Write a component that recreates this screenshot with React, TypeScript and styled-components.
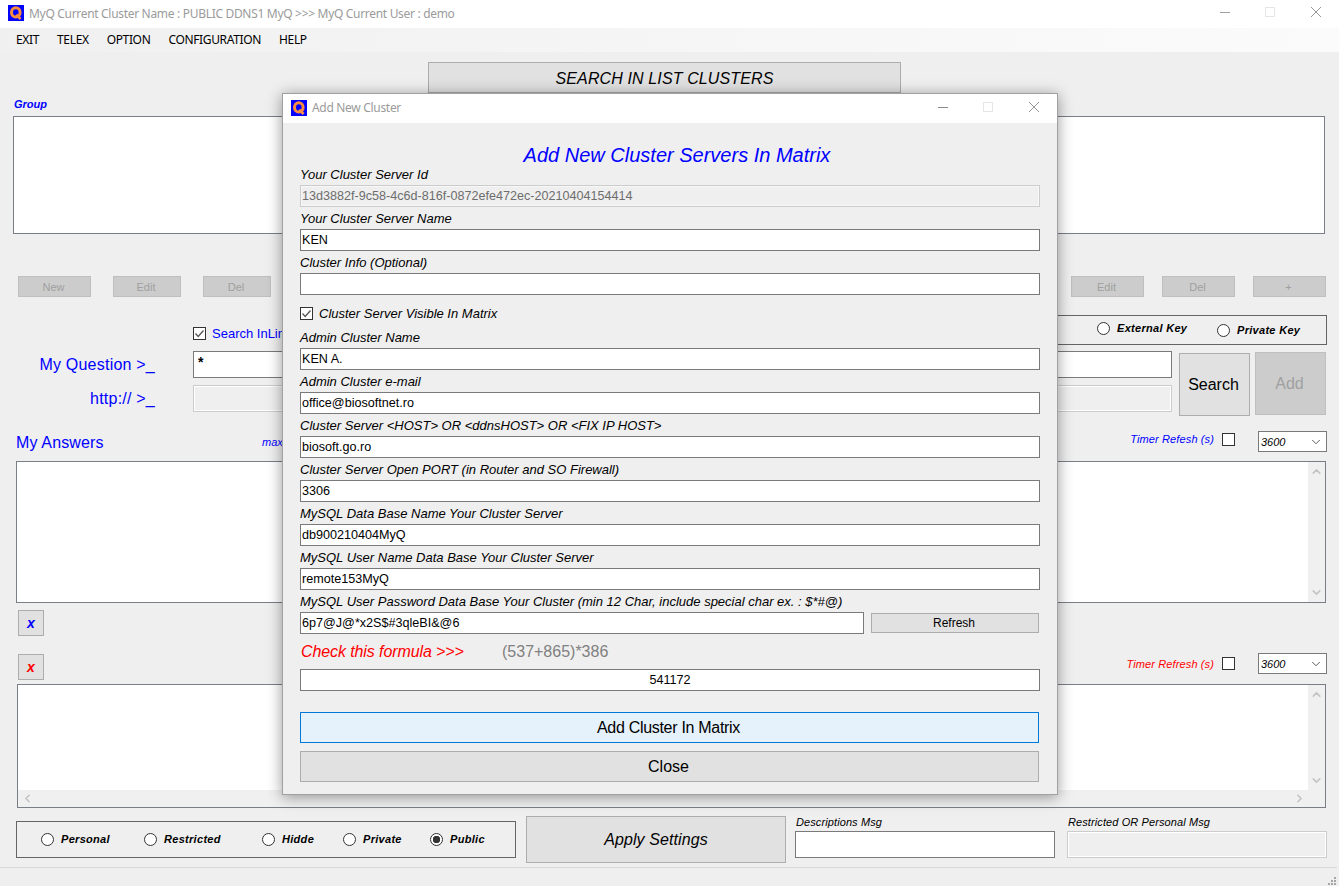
import React from "react";
import styled, { createGlobalStyle } from "styled-components";
import { ChevronDown, ChevronLeft, ChevronRight, ChevronUp } from "lucide-react";

const GlobalStyle = createGlobalStyle`
  html, body {
    margin: 0;
    height: 100%;
    overflow: hidden;
    background: #efefef;
    font-family: "Liberation Sans", Arial, sans-serif;
  }
  * {
    box-sizing: border-box;
  }
`;

const Page = styled.div`
  position: relative;
  width: 1339px;
  height: 886px;
  display: flex;
  flex-direction: column;
  overflow: hidden;
  background: #efefef;
`;

const TitleBar = styled.div<{ $modal?: boolean }>`
  flex: none;
  height: ${({ $modal }) => ($modal ? "29px" : "28px")};
  display: flex;
  align-items: center;
  gap: 5px;
  padding: 0 0 2px 8px;
  background: #fff;
  color: #9b9b9b;
  font-family: "Noto Sans", sans-serif;
  font-size: 12px;
  letter-spacing: -0.31px;
`;

const TitleText = styled.span`
  flex: 1;
  white-space: nowrap;
`;

const WindowControls = styled.div`
  display: flex;
  align-items: center;
  gap: 35px;
  padding: 0 18px 2px 0;

  svg:last-child {
    margin-left: 1px;
  }
`;

const MenuBar = styled.nav`
  flex: none;
  height: 24px;
  display: flex;
  align-items: center;
  gap: 18px;
  padding: 0 0 2px 16px;
  background: linear-gradient(to right, #f0f0f0, #fbfbfb);
  color: #000;
  font-family: "Noto Sans", sans-serif;
  font-size: 12px;
  letter-spacing: -0.35px;
`;

const Main = styled.main`
  flex: 1;
  display: flex;
  flex-direction: column;
  padding: 0 12px 0 16px;
`;

const SearchHeader = styled.div`
  width: 473px;
  height: 31px;
  margin: 10px 0 0 412px;
  padding-top: 2px;
  display: flex;
  align-items: center;
  justify-content: center;
  background: #e1e1e1;
  border: 1px solid #adadad;
  font-size: 16px;
  font-style: italic;
  letter-spacing: 0.12px;
`;

const GroupLabel = styled.div`
  height: 23px;
  margin-left: -2px;
  padding-bottom: 2px;
  display: flex;
  align-items: center;
  color: #0000ff;
  font-size: 11px;
  font-weight: 700;
  font-style: italic;
`;

const ListBox = styled.div`
  height: 118px;
  margin: 0 2px 0 -3px;
  background: #fff;
  border: 1px solid #7a7f87;
`;

const Toolbar = styled.div`
  height: 21px;
  margin: 42px 1px 0 2px;
  display: flex;
  justify-content: space-between;
`;

const ToolGroup = styled.div<{ $gap: number }>`
  display: flex;
  gap: ${({ $gap }) => $gap}px;
`;

const ToolButton = styled.div<{ $w: number }>`
  width: ${({ $w }) => $w}px;
  display: flex;
  align-items: center;
  justify-content: center;
  padding-right: 2px;
  background: #cccccc;
  border: 1px solid #bfbfbf;
  color: #a0a0a0;
  font-size: 11px;
`;

const OptionsRow = styled.div`
  height: 30px;
  margin-top: 18px;
  display: flex;
  align-items: center;
  padding-left: 177px;
`;

const CheckLabel = styled.label<{ $blue?: boolean }>`
  display: flex;
  align-items: center;
  gap: 6px;
  margin-top: ${({ $blue }) => ($blue ? "6px" : "0")};
  white-space: nowrap;
  color: ${({ $blue }) => ($blue ? "#0000ff" : "#000")};
  font-size: 13px;
  font-style: ${({ $blue }) => ($blue ? "normal" : "italic")};
`;

const Box = styled.span`
  flex: none;
  width: 13px;
  height: 13px;
  display: flex;
  align-items: center;
  justify-content: center;
  background: #fff;
  border: 1px solid #333;
`;

const KeyBox = styled.div`
  width: 620px;
  height: 30px;
  margin-left: auto;
  display: flex;
  justify-content: flex-end;
  align-items: center;
  padding-right: 26px;
  border: 1px solid #646464;
`;

const RadioItem = styled.label<{ $w?: number; $drop?: number }>`
  flex: none;
  width: ${({ $w }) => ($w ? `${$w}px` : "auto")};
  margin-top: ${({ $drop }) => $drop ?? 0}px;
  display: flex;
  align-items: center;
  gap: 7px;
  color: #000;
  font-size: 11px;
  font-weight: 700;
  font-style: italic;
  letter-spacing: 0.3px;
  white-space: nowrap;
`;

const RadioDot = styled.span<{ $on?: boolean }>`
  flex: none;
  width: 13px;
  height: 13px;
  border: 1px solid #333;
  border-radius: 50%;
  background: ${({ $on }) =>
    $on ? "radial-gradient(circle, #333 0 3.5px, #fff 4px)" : "#fff"};
`;

const QuestionGrid = styled.div`
  height: 65px;
  display: grid;
  grid-template-columns: 139px 1017px 78px 76px;
  grid-template-rows: 27px 27px;
  row-gap: 7px;
  margin-top: 6px;
`;

const PromptLabel = styled.div<{ $row: number }>`
  grid-column: 1;
  grid-row: ${({ $row }) => $row};
  display: flex;
  align-items: center;
  justify-content: flex-end;
  color: #0000ff;
  font-size: 16px;
  letter-spacing: 0.22px;
  white-space: nowrap;
`;

const QuestionInput = styled.input<{ $off?: boolean; $row: number }>`
  grid-column: 2;
  grid-row: ${({ $row }) => $row};
  margin-left: 38px;
  width: 979px;
  height: 27px;
  padding: 0 0 6px 4px;
  background: ${({ $off }) => ($off ? "#efefef" : "#fff")};
  border: 1px solid ${({ $off }) => ($off ? "#cccccc" : "#7a7a7a")};
  box-shadow: ${({ $off }) => ($off ? "inset 0 0 0 1px #fff" : "none")};
  outline: none;
  font-family: "Liberation Sans", Arial, sans-serif;
  font-size: 14px;
  font-weight: 700;
`;

const BigButton = styled.div<{ $off?: boolean }>`
  grid-column: ${({ $off }) => ($off ? 4 : 3)};
  grid-row: 1 / span 2;
  width: 71px;
  height: 63px;
  margin: ${({ $off }) => ($off ? "1px 0 0 5px" : "2px 0 0 7px")};
  padding-top: 1px;
  padding-right: 2px;
  display: flex;
  align-items: center;
  justify-content: center;
  background: ${({ $off }) => ($off ? "#cccccc" : "#e1e1e1")};
  border: 1px solid ${({ $off }) => ($off ? "#bfbfbf" : "#adadad")};
  color: ${({ $off }) => ($off ? "#a0a0a0" : "#000")};
  font-size: 16px;
`;

const HeaderRow = styled.div<{ $mt: number }>`
  height: 21px;
  margin-top: ${({ $mt }) => $mt}px;
  display: flex;
  align-items: center;
`;

const SectionTitle = styled.div`
  width: 246px;
  padding-top: 2px;
  color: #0000ff;
  font-size: 16px;
  letter-spacing: 0.15px;
`;

const MaxNote = styled.div`
  color: #0000ff;
  font-size: 11px;
  font-style: italic;
`;

const TimerGroup = styled.div`
  margin-left: auto;
  display: flex;
  align-items: center;
`;

const TimerCheck = styled.div<{ $raised?: boolean }>`
  display: flex;
  align-items: center;
  margin-bottom: ${({ $raised }) => ($raised ? "5px" : "0")};
`;

const TimerLabel = styled.span<{ $red?: boolean }>`
  margin-right: 8px;
  color: ${({ $red }) => ($red ? "#ff0000" : "#0000ff")};
  font-size: 11px;
  font-style: italic;
  letter-spacing: 0.12px;
`;

const SelectBox = styled.div`
  width: 69px;
  height: 21px;
  margin-left: 23px;
  display: flex;
  align-items: center;
  justify-content: space-between;
  padding: 0 3px 0 2px;
  background: #fff;
  border: 1px solid #7a7a7a;
  font-size: 11px;
  font-style: italic;
`;

const AnswerBox = styled.div<{ $h: number; $ml: number; $mt: number }>`
  height: ${({ $h }) => $h}px;
  margin: ${({ $mt }) => $mt}px 1px 0 ${({ $ml }) => $ml}px;
  display: grid;
  grid-template-columns: 1fr 17px;
  grid-template-rows: 1fr auto;
  background: #fff;
  border: 1px solid #7a7f87;
`;

const VScroll = styled.div`
  grid-column: 2;
  display: flex;
  flex-direction: column;
  align-items: center;
  justify-content: space-between;
  padding: 3px 0;
  background: #f0f0f0;
  color: #c4c4c4;
`;

const HScroll = styled.div`
  grid-column: 1 / span 2;
  height: 17px;
  display: flex;
  align-items: center;
  justify-content: space-between;
  padding: 0 19px 0 3px;
  background: #f0f0f0;
  color: #c4c4c4;
`;

const ClearButton = styled.div<{ $color: string }>`
  flex: none;
  width: 26px;
  height: 26px;
  margin-left: 2px;
  display: flex;
  align-items: center;
  justify-content: center;
  background: #e1e1e1;
  border: 1px solid #adadad;
  color: ${({ $color }) => $color};
  font-size: 14px;
  font-weight: 700;
  font-style: italic;
`;

const ClearRow = styled.div`
  margin-top: 7px;
`;

const SecondHeader = styled.div`
  height: 26px;
  margin-top: 18px;
  display: flex;
  align-items: flex-start;
`;

const SecondTimer = styled(TimerGroup)`
  height: 21px;
  margin-top: -1px;
`;

const BottomRow = styled.div`
  height: 47px;
  margin-top: 8px;
  display: grid;
  grid-template-columns: 500px 260px 260px 260px;
  column-gap: 10px;
`;

const VisibilityBox = styled.div`
  height: 37px;
  margin-top: 5px;
  display: flex;
  align-items: center;
  padding: 0 0 1px 24px;
  border: 1px solid #646464;
`;

const ApplyButton = styled.div`
  display: flex;
  align-items: center;
  justify-content: center;
  background: #e1e1e1;
  border: 1px solid #adadad;
  font-size: 16px;
  font-style: italic;
  letter-spacing: 0.1px;
`;

const MsgField = styled.div<{ $ml: number }>`
  margin-left: ${({ $ml }) => $ml}px;
  width: 260px;
`;

const MsgLabel = styled.div`
  height: 15px;
  padding: 0 0 3px 1px;
  display: flex;
  align-items: center;
  font-size: 11px;
  font-style: italic;
  letter-spacing: 0.1px;
  white-space: nowrap;
`;

const MsgInput = styled.div<{ $off?: boolean }>`
  height: 27px;
  background: ${({ $off }) => ($off ? "#efefef" : "#fff")};
  border: 1px solid ${({ $off }) => ($off ? "#cccccc" : "#7a7a7a")};
  box-shadow: ${({ $off }) => ($off ? "inset 0 0 0 1px #fff" : "none")};
`;

const StatusBar = styled.footer`
  flex: none;
  height: 19px;
  margin-right: 2px;
  display: flex;
  justify-content: flex-end;
  align-items: flex-end;
  border-top: 1px solid #d9d9d9;
`;

const Modal = styled.section`
  position: absolute;
  left: 282px;
  top: 93px;
  width: 776px;
  height: 702px;
  display: flex;
  flex-direction: column;
  background: #efefef;
  border: 1px solid #a0a0a0;
  box-shadow: 0 2px 14px rgba(0, 0, 0, 0.4);
`;

const ModalBody = styled.div`
  flex: 1;
  padding: 0 17px;
  display: flex;
  flex-direction: column;
`;

const ModalHeading = styled.h1`
  height: 40px;
  margin: 0;
  padding: 24px 0 0 14px;
  display: flex;
  align-items: center;
  justify-content: center;
  color: #0000ff;
  font-size: 20px;
  font-weight: 400;
  font-style: italic;
  line-height: 23px;
`;

const FieldLabel = styled.div`
  height: 22px;
  display: flex;
  align-items: center;
  font-size: 13px;
  font-style: italic;
  white-space: nowrap;
`;

const TextField = styled.input<{ $off?: boolean; $center?: boolean }>`
  display: block;
  width: 100%;
  height: 22px;
  padding: 0 1px;
  background: ${({ $off }) => ($off ? "#efefef" : "#fff")};
  border: 1px solid ${({ $off }) => ($off ? "#cccccc" : "#7a7a7a")};
  box-shadow: ${({ $off }) => ($off ? "inset 0 0 0 1px #f7f7f7" : "none")};
  outline: none;
  color: ${({ $off }) => ($off ? "#6d6d6d" : "#000")};
  font-family: "Liberation Sans", Arial, sans-serif;
  font-size: 12.6px;
  text-align: ${({ $center }) => ($center ? "center" : "left")};
`;

const CheckRow = styled.div`
  height: 31px;
  padding-top: 5px;
  display: flex;
  align-items: center;
`;

const PasswordRow = styled.div`
  display: grid;
  grid-template-columns: 564px 168px;
  column-gap: 7px;
  align-items: center;
`;

const RefreshButton = styled.div`
  height: 20px;
  display: flex;
  align-items: center;
  justify-content: center;
  padding-right: 2px;
  background: #e1e1e1;
  border: 1px solid #adadad;
  font-size: 12px;
`;

const FormulaRow = styled.div`
  height: 35px;
  padding-top: 1px;
  display: grid;
  grid-template-columns: 202px auto;
  align-items: center;
`;

const FormulaLabel = styled.div`
  padding-left: 1px;
  color: #ff0000;
  font-size: 16px;
  font-style: italic;
  letter-spacing: -0.1px;
`;

const FormulaValue = styled.div`
  margin-bottom: 1px;
  color: #808080;
  font-size: 16px;
`;

const WideButton = styled.div<{ $primary?: boolean }>`
  height: 31px;
  margin: ${({ $primary }) => ($primary ? "21px 1px 0 0" : "8px 1px 0 0")};
  padding-right: 2px;
  display: flex;
  align-items: center;
  justify-content: center;
  background: ${({ $primary }) => ($primary ? "#e5f1fb" : "#e1e1e1")};
  border: 1px solid ${({ $primary }) => ($primary ? "#0078d7" : "#adadad")};
  font-size: 16px;
  letter-spacing: ${({ $primary }) => ($primary ? "-0.3px" : "0")};
`;

const AppLogo = () => (
  <svg width="16" height="16" viewBox="0 0 16 16" style={{ flex: "none" }}>
    <rect width="16" height="16" fill="#0000ff" />
    <ellipse cx="7.8" cy="7.4" rx="4.3" ry="4.6" fill="#0000ff" stroke="#f98f3e" strokeWidth="3" />
    <path d="M8.2 9.8L12.6 14" stroke="#f98f3e" strokeWidth="2.6" />
  </svg>
);

const Minimize = ({ dark }: { dark?: boolean }) => (
  <svg width="10" height="10" viewBox="0 0 10 10">
    <path d="M0 5.5H10" stroke={dark ? "#8c8c8c" : "#a0a0a0"} />
  </svg>
);

const Maximize = () => (
  <svg width="10" height="10" viewBox="0 0 10 10">
    <rect x="0.5" y="0.5" width="9" height="9" fill="none" stroke="#e6e6e6" />
  </svg>
);

const CloseIcon = () => (
  <svg width="10" height="10" viewBox="0 0 10 10">
    <path d="M0 0L10 10M10 0L0 10" stroke="#8c8c8c" strokeWidth="0.9" />
  </svg>
);

const Grip = () => (
  <svg width="10" height="10" viewBox="0 0 10 10" fill="#a6a6a6">
    <rect x="7" y="1" width="2" height="2" />
    <rect x="4" y="4" width="2" height="2" />
    <rect x="7" y="4" width="2" height="2" />
    <rect x="1" y="7" width="2" height="2" />
    <rect x="4" y="7" width="2" height="2" />
    <rect x="7" y="7" width="2" height="2" />
  </svg>
);

const CheckMark = () => (
  <svg width="11" height="11" viewBox="0 0 11 11">
    <path d="M1.5 5.5L4.2 8.5L9.5 2.5" fill="none" stroke="#555" strokeWidth="1.3" />
  </svg>
);

const Timer = ({ label, red }: { label: string; red?: boolean }) => (
  <>
    <TimerCheck $raised={!red}>
      <TimerLabel $red={red}>{label}</TimerLabel>
      <Box />
    </TimerCheck>
    <SelectBox>
      3600
      <ChevronDown size={14} strokeWidth={1.5} color="#444" />
    </SelectBox>
  </>
);

const fields: { label: string; value: string }[] = [
  { label: "Admin Cluster Name", value: "KEN A." },
  { label: "Admin Cluster e-mail", value: "office@biosoftnet.ro" },
  { label: "Cluster Server <HOST> OR <ddnsHOST> OR <FIX IP HOST>", value: "biosoft.go.ro" },
  { label: "Cluster Server Open PORT (in Router and SO Firewall)", value: "3306" },
  { label: "MySQL Data Base Name Your Cluster Server", value: "db900210404MyQ" },
  { label: "MySQL User Name Data Base Your Cluster Server", value: "remote153MyQ" },
];

const visibility = [
  { label: "Personal", w: 103 },
  { label: "Restricted", w: 118 },
  { label: "Hidde", w: 81 },
  { label: "Private", w: 87 },
  { label: "Public", w: 70, on: true },
];

const App: React.FC = () => {
  return (
    <Page>
      <GlobalStyle />
      <TitleBar>
        <AppLogo />
        <TitleText>MyQ Current Cluster Name : PUBLIC DDNS1 MyQ &gt;&gt;&gt; MyQ Current User : demo</TitleText>
        <WindowControls>
          <Minimize />
          <Maximize />
          <CloseIcon />
        </WindowControls>
      </TitleBar>
      <MenuBar>
        <span>EXIT</span>
        <span>TELEX</span>
        <span>OPTION</span>
        <span>CONFIGURATION</span>
        <span>HELP</span>
      </MenuBar>

      <Main>
        <SearchHeader>SEARCH IN LIST CLUSTERS</SearchHeader>
        <GroupLabel>Group</GroupLabel>
        <ListBox />

        <Toolbar>
          <ToolGroup $gap={22}>
            <ToolButton $w={73}>New</ToolButton>
            <ToolButton $w={68}>Edit</ToolButton>
            <ToolButton $w={68}>Del</ToolButton>
          </ToolGroup>
          <ToolGroup $gap={18}>
            <ToolButton $w={73}>Edit</ToolButton>
            <ToolButton $w={73}>Del</ToolButton>
            <ToolButton $w={73}>+</ToolButton>
          </ToolGroup>
        </Toolbar>

        <OptionsRow>
          <CheckLabel $blue>
            <Box>
              <CheckMark />
            </Box>
            Search InLine
          </CheckLabel>
          <KeyBox>
            <RadioItem $w={169} $drop={-2}>
              <RadioDot />
              Public Key
            </RadioItem>
            <RadioItem $w={120} $drop={-4}>
              <RadioDot />
              External Key
            </RadioItem>
            <RadioItem $w={83}>
              <RadioDot />
              Private Key
            </RadioItem>
          </KeyBox>
        </OptionsRow>

        <QuestionGrid>
          <PromptLabel $row={1}>My Question &gt;_</PromptLabel>
          <QuestionInput $row={1} defaultValue="*" />
          <BigButton>Search</BigButton>
          <BigButton $off>Add</BigButton>
          <PromptLabel $row={2}>http:// &gt;_</PromptLabel>
          <QuestionInput $row={2} $off />
        </QuestionGrid>

        <HeaderRow $mt={15}>
          <SectionTitle>My Answers</SectionTitle>
          <MaxNote>max</MaxNote>
          <TimerGroup>
            <Timer label="Timer Refesh (s)" />
          </TimerGroup>
        </HeaderRow>

        <AnswerBox $h={142} $ml={0} $mt={9}>
          <VScroll>
            <ChevronUp size={13} strokeWidth={3} />
            <ChevronDown size={13} strokeWidth={3} />
          </VScroll>
        </AnswerBox>

        <ClearRow>
          <ClearButton $color="#0000ff">x</ClearButton>
        </ClearRow>

        <SecondHeader>
          <ClearButton $color="#ff0000">x</ClearButton>
          <SecondTimer>
            <Timer label="Timer Refresh (s)" red />
          </SecondTimer>
        </SecondHeader>

        <AnswerBox $h={124} $ml={1} $mt={4}>
          <VScroll>
            <ChevronUp size={13} strokeWidth={3} />
            <ChevronDown size={13} strokeWidth={3} />
          </VScroll>
          <HScroll>
            <ChevronLeft size={13} strokeWidth={3} />
            <ChevronRight size={13} strokeWidth={3} />
          </HScroll>
        </AnswerBox>

        <BottomRow>
          <VisibilityBox>
            {visibility.map((v) => (
              <RadioItem key={v.label} $w={v.w}>
                <RadioDot $on={v.on} />
                {v.label}
              </RadioItem>
            ))}
          </VisibilityBox>
          <ApplyButton>Apply Settings</ApplyButton>
          <MsgField $ml={-1}>
            <MsgLabel>Descriptions Msg</MsgLabel>
            <MsgInput />
          </MsgField>
          <MsgField $ml={1}>
            <MsgLabel>Restricted OR Personal Msg</MsgLabel>
            <MsgInput $off />
          </MsgField>
        </BottomRow>
      </Main>

      <StatusBar>
        <Grip />
      </StatusBar>

      <Modal>
        <TitleBar $modal>
          <AppLogo />
          <TitleText>Add New Cluster</TitleText>
          <WindowControls>
            <Minimize dark />
            <Maximize />
            <CloseIcon />
          </WindowControls>
        </TitleBar>
        <ModalBody>
          <ModalHeading>Add New Cluster Servers In Matrix</ModalHeading>
          <FieldLabel>Your Cluster Server Id</FieldLabel>
          <TextField $off readOnly value="13d3882f-9c58-4c6d-816f-0872efe472ec-20210404154414" />
          <FieldLabel>Your Cluster Server Name</FieldLabel>
          <TextField readOnly value="KEN" />
          <FieldLabel>Cluster Info (Optional)</FieldLabel>
          <TextField readOnly value="" />
          <CheckRow>
            <CheckLabel>
              <Box>
                <CheckMark />
              </Box>
              Cluster Server Visible In Matrix
            </CheckLabel>
          </CheckRow>
          {fields.map((f) => (
            <React.Fragment key={f.label}>
              <FieldLabel>{f.label}</FieldLabel>
              <TextField readOnly value={f.value} />
            </React.Fragment>
          ))}
          <FieldLabel>MySQL User Password Data Base Your Cluster (min 12 Char, include special char ex. : $*#@)</FieldLabel>
          <PasswordRow>
            <TextField readOnly value="6p7@J@*x2S$#3qleBI&@6" />
            <RefreshButton>Refresh</RefreshButton>
          </PasswordRow>
          <FormulaRow>
            <FormulaLabel>Check this formula &gt;&gt;&gt;</FormulaLabel>
            <FormulaValue>(537+865)*386</FormulaValue>
          </FormulaRow>
          <TextField $center readOnly value="541172" />
          <WideButton $primary>Add Cluster In Matrix</WideButton>
          <WideButton>Close</WideButton>
        </ModalBody>
      </Modal>
    </Page>
  );
};

export default App;
